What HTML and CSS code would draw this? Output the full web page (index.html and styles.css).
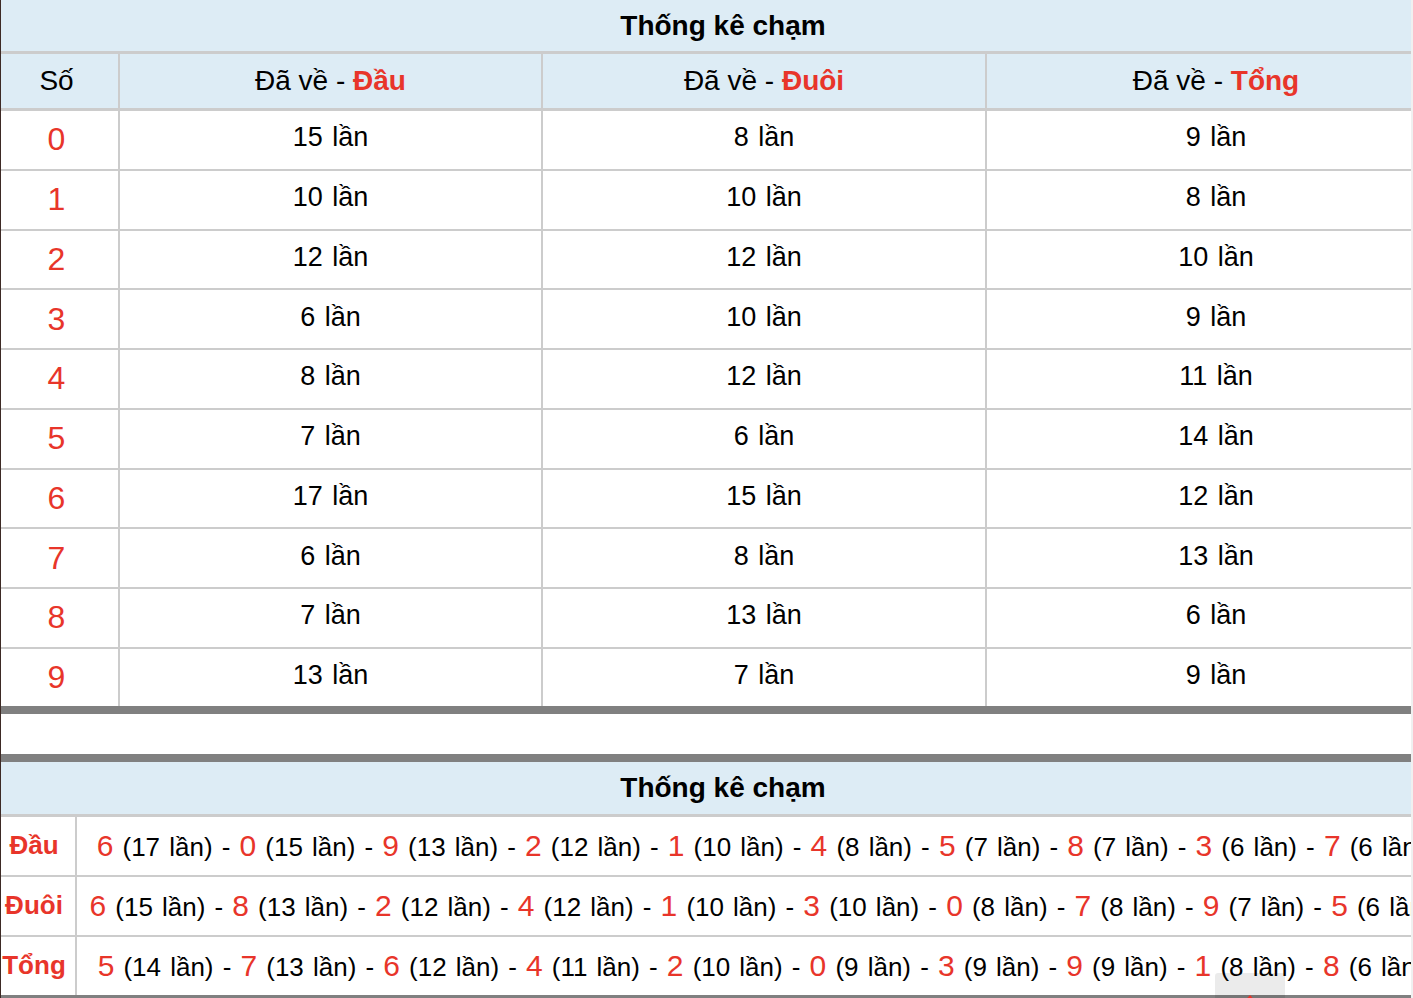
FILE: index.html
```html
<!DOCTYPE html>
<html lang="vi">
<head>
<meta charset="utf-8">
<title>Thống kê chạm</title>
<link rel="stylesheet" href="styles.css">
</head>
<body>
<div class="frame">
  <div class="clip">
    <table class="tk tk-main">
      <colgroup><col class="m1"><col class="m2"><col class="m3"><col class="m4"></colgroup>
      <thead>
        <tr><th colspan="4" class="title">Thống kê chạm</th></tr>
        <tr class="hdr">
          <th class="first">Số</th>
          <th>Đã về - <b class="red">Đầu</b></th>
          <th>Đã về - <b class="red">Đuôi</b></th>
          <th class="last">Đã về - <b class="red">Tổng</b></th>
        </tr>
      </thead>
      <tbody>
        <tr><td class="num">0</td><td>15 lần</td><td>8 lần</td><td class="last">9 lần</td></tr>
        <tr><td class="num">1</td><td>10 lần</td><td>10 lần</td><td class="last">8 lần</td></tr>
        <tr><td class="num">2</td><td>12 lần</td><td>12 lần</td><td class="last">10 lần</td></tr>
        <tr><td class="num">3</td><td>6 lần</td><td>10 lần</td><td class="last">9 lần</td></tr>
        <tr><td class="num">4</td><td>8 lần</td><td>12 lần</td><td class="last">11 lần</td></tr>
        <tr><td class="num">5</td><td>7 lần</td><td>6 lần</td><td class="last">14 lần</td></tr>
        <tr><td class="num">6</td><td>17 lần</td><td>15 lần</td><td class="last">12 lần</td></tr>
        <tr><td class="num">7</td><td>6 lần</td><td>8 lần</td><td class="last">13 lần</td></tr>
        <tr><td class="num">8</td><td>7 lần</td><td>13 lần</td><td class="last">6 lần</td></tr>
        <tr class="end"><td class="num">9</td><td>13 lần</td><td>7 lần</td><td class="last">9 lần</td></tr>
      </tbody>
    </table>

    <div class="gap"></div>

    <table class="tk tk-sum">
      <colgroup><col class="s1"><col class="s2"></colgroup>
      <thead>
        <tr><th colspan="2" class="title">Thống kê chạm</th></tr>
      </thead>
      <tbody>
        <tr>
          <td class="lbl">Đầu</td>
          <td class="list last"><span class="d">6</span> (17 lần) - <span class="d">0</span> (15 lần) - <span class="d">9</span> (13 lần) - <span class="d">2</span> (12 lần) - <span class="d">1</span> (10 lần) - <span class="d">4</span> (8 lần) - <span class="d">5</span> (7 lần) - <span class="d">8</span> (7 lần) - <span class="d">3</span> (6 lần) - <span class="d">7</span> (6 lần)</td>
        </tr>
        <tr>
          <td class="lbl">Đuôi</td>
          <td class="list last"><span class="d">6</span> (15 lần) - <span class="d">8</span> (13 lần) - <span class="d">2</span> (12 lần) - <span class="d">4</span> (12 lần) - <span class="d">1</span> (10 lần) - <span class="d">3</span> (10 lần) - <span class="d">0</span> (8 lần) - <span class="d">7</span> (8 lần) - <span class="d">9</span> (7 lần) - <span class="d">5</span> (6 lần)</td>
        </tr>
        <tr class="end">
          <td class="lbl">Tổng</td>
          <td class="list last"><span class="d">5</span> (14 lần) - <span class="d">7</span> (13 lần) - <span class="d">6</span> (12 lần) - <span class="d">4</span> (11 lần) - <span class="d">2</span> (10 lần) - <span class="d">0</span> (9 lần) - <span class="d">3</span> (9 lần) - <span class="d">9</span> (9 lần) - <span class="d">1</span> (8 lần) - <span class="d">8</span> (6 lần)</td>
        </tr>
      </tbody>
    </table>
  </div>
</div>
<a class="totop" href="#" aria-label="Lên đầu trang">
  <svg width="16" height="10" viewBox="0 0 16 10"><path d="M8 0 L16 9 L0 9 Z" fill="#e8352a"/></svg>
</a>
</body>
</html>
```

FILE: styles.css
```css
html, body {
  margin: 0;
  padding: 0;
  background: #ffffff;
}

body {
  font-family: "Liberation Sans", Arial, Helvetica, sans-serif;
  color: #000;
  width: 1413px;
  height: 998px;
  overflow: hidden;
  position: relative;
}

.frame {
  width: 1413px;
}

.clip {
  width: 1410px;
  overflow: hidden;
  border-left: 1px solid #3d2a25;
  border-right: 2px solid #f0f0f0;
}

.tk {
  width: 1444px;
  table-layout: fixed;
  border-collapse: separate;
  border-spacing: 0;
}

.tk th,
.tk td {
  padding: 0;
  text-align: center;
  vertical-align: middle;
  white-space: nowrap;
  border-right: 2px solid #cccccc;
  border-bottom: 2px solid #cccccc;
  box-sizing: border-box;
}

.tk .last {
  border-right: 0;
}

.tk .end td {
  border-bottom: 0;
}

.tk th.title {
  background: #ddecf5;
  height: 54px;
  font-size: 28px;
  font-weight: bold;
  border-right: 0;
  border-bottom: 3px solid #cccccc;
  padding-bottom: 0;
}

.tk .hdr th {
  background: #ddecf5;
  height: 57px;
  font-size: 28px;
  font-weight: normal;
  border-bottom-width: 3px;
}

.tk .hdr th.first {
  padding-right: 6px;
}

.red {
  color: #e8352a;
  font-weight: bold;
}

.tk-main {
  border-bottom: 8px solid #808080;
}

.m1 { width: 119px; }
.m2 { width: 423px; }
.m3 { width: 444px; }
.m4 { width: 458px; }

.tk-main td {
  height: 59.75px;
  font-size: 27px;
  word-spacing: 2px;
  padding-bottom: 4px;
}

.tk-main .end td {
  height: 57.5px;
}

.tk-main td.num {
  color: #e8352a;
  font-size: 32px;
  padding-bottom: 0;
  padding-right: 6px;
}

.gap {
  height: 40px;
  background: #fff;
}

.tk-sum {
  border-top: 8px solid #808080;
  border-bottom: 8px solid #808080;
}

.s1 { width: 76px; }
.s2 { width: 1368px; }

.tk-sum th.title {
  height: 55px;
}

.tk-sum td {
  height: 60px;
}

.tk-sum .end td {
  height: 58px;
}

.tk-sum td.lbl {
  color: #e8352a;
  font-weight: bold;
  font-size: 26px;
  padding-right: 8px;
  padding-bottom: 2px;
}

.tk-sum td.list {
  font-size: 26px;
  word-spacing: 1.9px;
}

.tk-sum .d {
  color: #e8352a;
  font-size: 30px;
}

.totop {
  position: absolute;
  left: 1215px;
  top: 973px;
  width: 70px;
  height: 40px;
  background: rgba(0, 0, 0, 0.08);
  border-radius: 3px 3px 0 0;
  display: flex;
  justify-content: center;
  padding-top: 22px;
  box-sizing: border-box;
}

.totop svg {
  display: block;
}
```
